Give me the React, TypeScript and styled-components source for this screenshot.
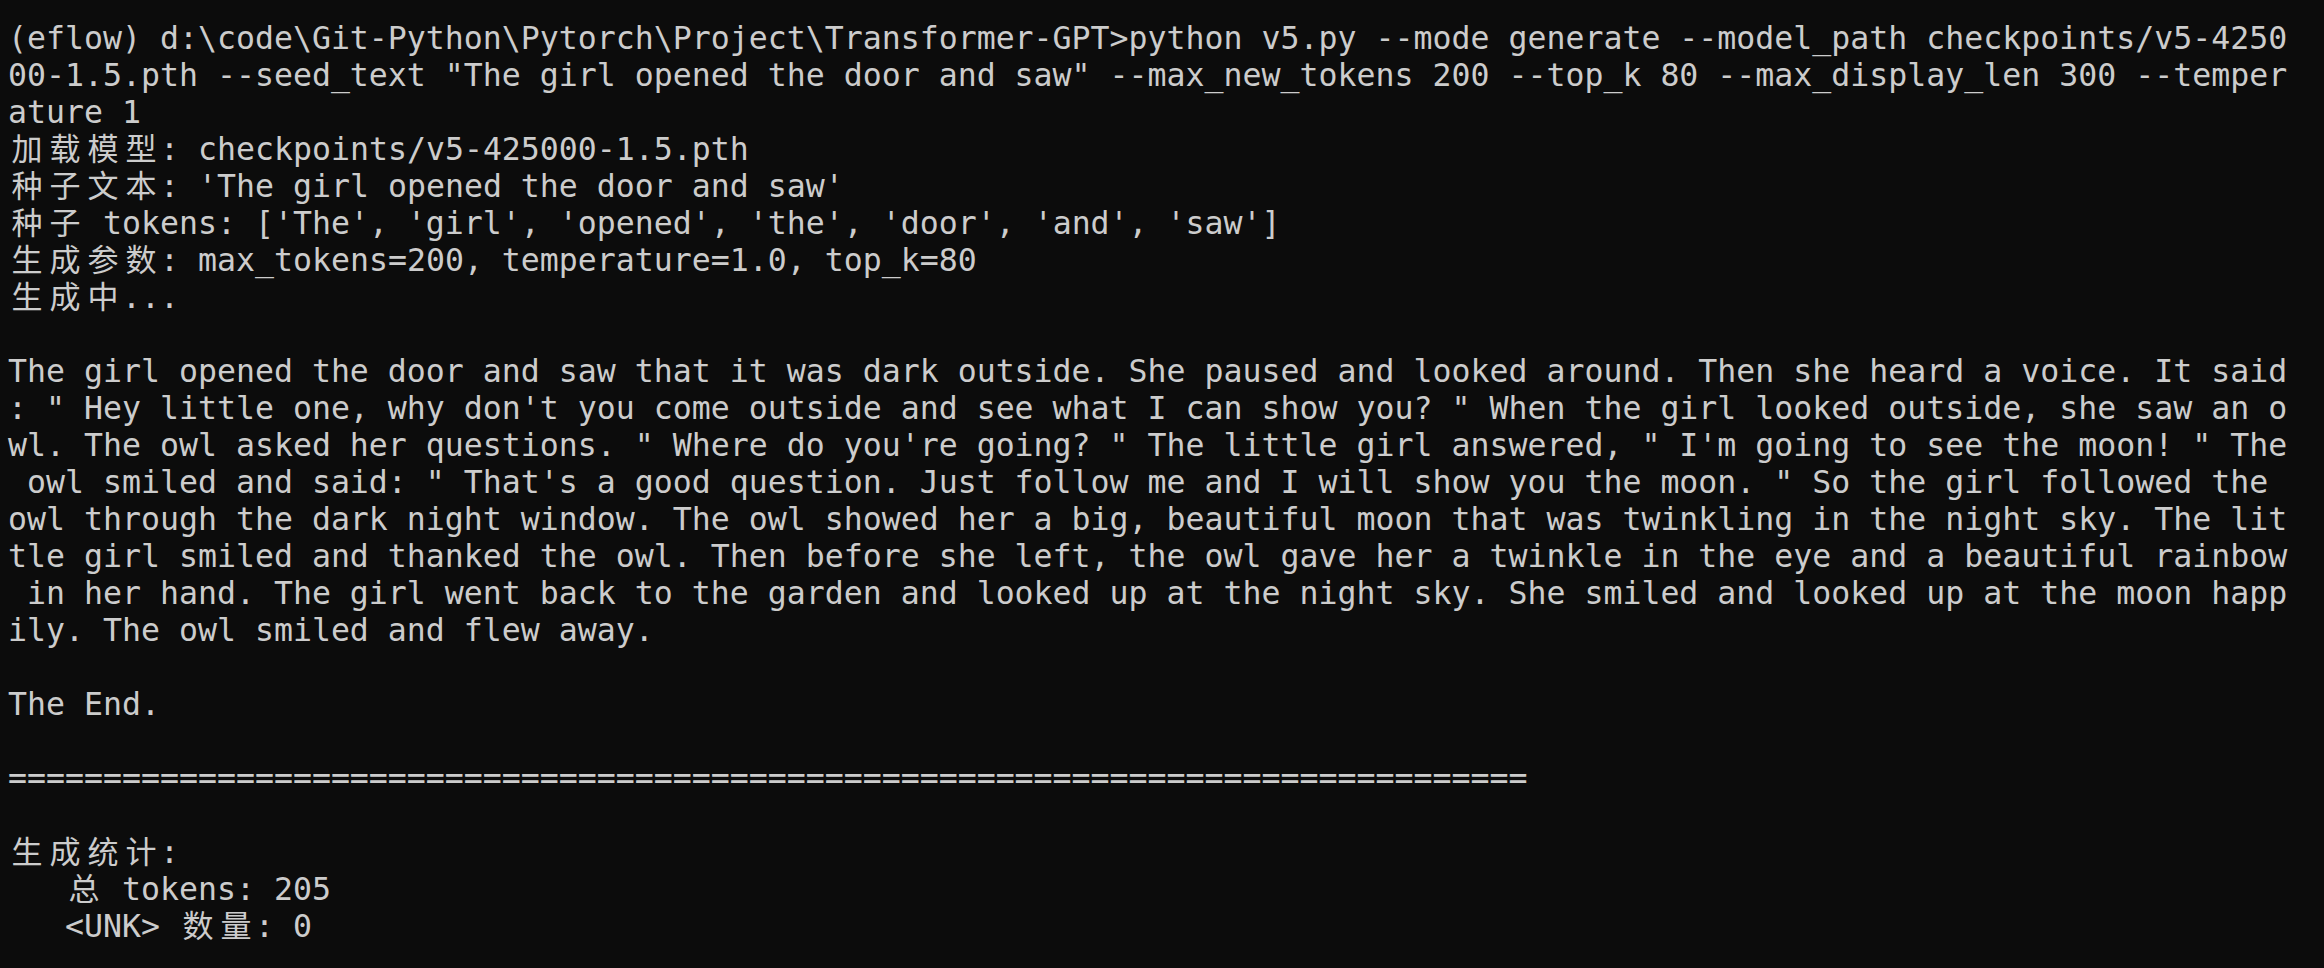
import React from "react";
import styled, { createGlobalStyle } from "styled-components";

const GlobalStyle = createGlobalStyle`
  html, body {
    margin: 0;
    padding: 0;
    background: #0c0c0c;
  }
  body {
    width: 2324px;
    height: 968px;
    overflow: hidden;
  }
`;

const Terminal = styled.main`
  box-sizing: border-box;
  width: 2324px;
  height: 968px;
  padding: 20px 0 0 8px;
  background: #0c0c0c;
  color: #cccccc;
  font-family: "DejaVu Sans Mono", "Liberation Mono", monospace;
  font-size: 31.56px;
  display: flex;
  flex-direction: column;
`;

const Line = styled.div`
  height: 37px;
  line-height: 37px;
  white-space: pre;
`;

const Wide = styled.span`
  display: inline-block;
  width: 38px;
  height: 37px;
  line-height: 31px;
  vertical-align: top;
  text-align: center;
  font-family: "Noto Sans CJK SC", "Noto Sans CJK JP", sans-serif;
  font-size: 31px;
`;

const lines: string[] = [
  "(eflow) d:\\code\\Git-Python\\Pytorch\\Project\\Transformer-GPT>python v5.py --mode generate --model_path checkpoints/v5-4250",
  "00-1.5.pth --seed_text \"The girl opened the door and saw\" --max_new_tokens 200 --top_k 80 --max_display_len 300 --temper",
  "ature 1",
  "加载模型: checkpoints/v5-425000-1.5.pth",
  "种子文本: 'The girl opened the door and saw'",
  "种子 tokens: ['The', 'girl', 'opened', 'the', 'door', 'and', 'saw']",
  "生成参数: max_tokens=200, temperature=1.0, top_k=80",
  "生成中...",
  "",
  "The girl opened the door and saw that it was dark outside. She paused and looked around. Then she heard a voice. It said",
  ": \" Hey little one, why don't you come outside and see what I can show you? \" When the girl looked outside, she saw an o",
  "wl. The owl asked her questions. \" Where do you're going? \" The little girl answered, \" I'm going to see the moon! \" The",
  " owl smiled and said: \" That's a good question. Just follow me and I will show you the moon. \" So the girl followed the",
  "owl through the dark night window. The owl showed her a big, beautiful moon that was twinkling in the night sky. The lit",
  "tle girl smiled and thanked the owl. Then before she left, the owl gave her a twinkle in the eye and a beautiful rainbow",
  " in her hand. The girl went back to the garden and looked up at the night sky. She smiled and looked up at the moon happ",
  "ily. The owl smiled and flew away.",
  "",
  "The End.",
  "",
  "=".repeat(80),
  "",
  "生成统计:",
  "   总 tokens: 205",
  "   <UNK> 数量: 0",
];

const isWide = (ch: string) => /[\u2E80-\u9FFF\uF900-\uFAFF\uFF00-\uFF60]/.test(ch);

function renderLine(text: string) {
  const parts: React.ReactNode[] = [];
  let buf = "";
  Array.from(text).forEach((ch, i) => {
    if (isWide(ch)) {
      if (buf) {
        parts.push(buf);
        buf = "";
      }
      parts.push(<Wide key={i}>{ch}</Wide>);
    } else {
      buf += ch;
    }
  });
  if (buf) parts.push(buf);
  return parts;
}

export default function App() {
  return (
    <>
      <GlobalStyle />
      <Terminal>
        {lines.map((l, i) => (
          <Line key={i}>{l ? renderLine(l) : " "}</Line>
        ))}
      </Terminal>
    </>
  );
}
